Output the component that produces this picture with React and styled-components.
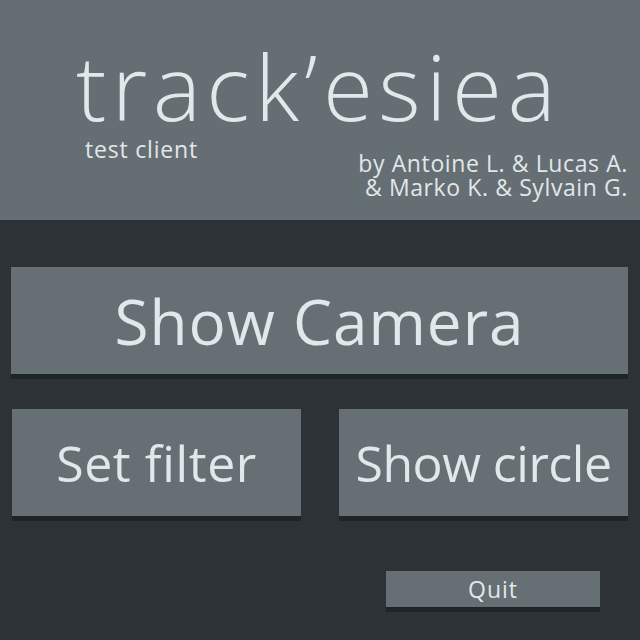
import React from 'react';
import styled, { createGlobalStyle } from 'styled-components';

const GlobalStyle = createGlobalStyle`
  html, body {
    margin: 0;
    padding: 0;
    background: #2c3235;
  }
  body {
    font-family: 'Open Sans', 'Noto Sans', sans-serif;
    color: #e1e7ea;
  }
`;

const Screen = styled.div`
  width: 640px;
  height: 640px;
  display: flex;
  flex-direction: column;
  background: #2c3235;
  overflow: hidden;
`;

const Header = styled.header`
  height: 220px;
  box-sizing: border-box;
  background: #656e73;
  padding: 44px 12px 0 0;
  display: flex;
  flex-direction: column;
`;

const Title = styled.h1`
  margin: 0 0 0 76px;
  font-size: 91px;
  font-weight: 300;
  line-height: 84px;
  letter-spacing: 5.4px;
`;

const SubRow = styled.div`
  display: flex;
  justify-content: space-between;
  align-items: flex-start;
  margin-top: 8px;
`;

const Subtitle = styled.div`
  margin: 0 0 0 85px;
  font-size: 23px;
  line-height: 26px;
  letter-spacing: 0.8px;
`;

const Credits = styled.div`
  margin-top: 15px;
  font-size: 23px;
  line-height: 24px;
  text-align: right;
  letter-spacing: 0.6px;
`;

const Body = styled.main`
  flex: 1;
  display: flex;
  flex-direction: column;
  padding: 47px 12px 0 11px;
`;

const Button = styled.button`
  box-sizing: border-box;
  border: none;
  border-radius: 0;
  background: #656f74;
  color: #e1e7ea;
  font-family: 'Open Sans', 'Noto Sans', sans-serif;
  font-size: ${(p) => p.$size}px;
  height: ${(p) => p.$height}px;
  box-shadow: 0 5px 0 #1f2427;
  padding: 0;
  letter-spacing: ${(p) => p.$spacing || 0}px;
  cursor: pointer;
`;

const QuitButton = styled(Button)`
  width: 214px;
`;

const Row = styled.div`
  display: grid;
  grid-template-columns: 289px 289px;
  justify-content: space-between;
  margin-top: ${(p) => p.$top}px;
  padding-left: ${(p) => p.$left || 0}px;
`;

const QuitRow = styled.div`
  display: flex;
  justify-content: flex-end;
  margin-top: 55px;
  padding-right: 28px;
`;

export default function App() {
  return (
    <>
      <GlobalStyle />
      <Screen>
        <Header>
          <Title>track’esiea</Title>
          <SubRow>
            <Subtitle>test client</Subtitle>
            <Credits>
              by Antoine L. &amp; Lucas A.
              <br />
              &amp; Marko K. &amp; Sylvain G.
            </Credits>
          </SubRow>
        </Header>
        <Body>
          <Button $size={62} $height={107} $spacing={1}>Show Camera</Button>
          <Row $top={35} $left={1}>
            <Button $size={50} $height={107} $spacing={0.6}>Set filter</Button>
            <Button $size={50} $height={107} $spacing={-0.5}>Show circle</Button>
          </Row>
          <QuitRow>
            <QuitButton $size={23} $height={36} $spacing={1}>Quit</QuitButton>
          </QuitRow>
        </Body>
      </Screen>
    </>
  );
}
